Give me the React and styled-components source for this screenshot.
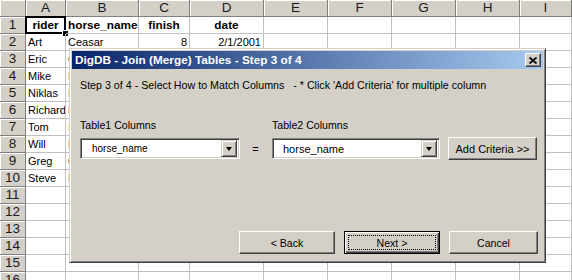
import React from 'react'
import styled, { createGlobalStyle, css } from 'styled-components'

const GlobalStyle = createGlobalStyle`
  html, body { margin: 0; padding: 0; background: #fff; overflow: hidden; }
  * { box-sizing: border-box; }
`

const COLS = ['A', 'B', 'C', 'D', 'E', 'F', 'G', 'H', 'I']

// only the first rows of C and D show, the rest sit behind the dialog
const rows = [
  { a: 'rider', b: 'horse_name', c: 'finish', d: 'date', head: true },
  { a: 'Art', b: 'Ceasar', c: '8', d: '2/1/2001' },
  { a: 'Eric', b: 'Comet' },
  { a: 'Mike', b: 'Flash' },
  { a: 'Niklas', b: 'Fury' },
  { a: 'Richard', b: 'Nugget' },
  { a: 'Tom', b: 'Ike' },
  { a: 'Will', b: 'Nova' },
  { a: 'Greg', b: 'Cody' },
  { a: 'Steve', b: 'Fritz' },
]

const Screen = styled.div`
  position: relative;
  width: 572px;
  height: 280px;
  overflow: hidden;
  background: #fff;
`

const Sheet = styled.div`
  display: grid;
  grid-template-columns: 26px 40px 73px 51px 74px 64px 64px 64px 64px 1fr;
  grid-auto-rows: 17px;
  font-family: "Liberation Sans", Arial, sans-serif;
  font-size: 11px;
  color: #000;
`

const HeadCell = styled.div`
  background: #d4d0c8;
  border-right: 1px solid #808080;
  border-bottom: 1px solid #808080;
  box-shadow: inset 1px 1px #fff;
  display: flex;
  align-items: center;
  justify-content: center;
  font-size: 13.5px;
  line-height: 16px;
  color: #1a1a1a;
`

const Cell = styled.div`
  position: relative;
  border-right: 1px solid #c0c0c0;
  border-bottom: 1px solid #c0c0c0;
  padding: 1px 2px 0;
  line-height: 15px;
  white-space: nowrap;
  overflow: hidden;
  text-align: ${p => p.$align || 'left'};
  font-weight: ${p => (p.$bold ? 'bold' : 'normal')};
  font-size: ${p => (p.$bold ? '11.8px' : '11px')};
  ${p => p.$selected && css`
    overflow: visible;
    &::before {
      content: '';
      position: absolute;
      left: -1px; top: -1px; right: -1px; bottom: -1px;
      border: 2px solid #000;
      pointer-events: none;
    }
    &::after {
      content: '';
      position: absolute;
      right: -3px; bottom: -3px;
      width: 5px; height: 5px;
      background: #000;
      outline: 1px solid #fff;
    }
  `}
`

const Dialog = styled.div`
  position: absolute;
  left: 69px;
  top: 48px;
  width: 477px;
  height: 215px;
  background: #d4d0c8;
  border: 1px solid;
  border-color: #d4d0c8 #404040 #404040 #d4d0c8;
  box-shadow: inset 1px 1px #fff, inset -1px -1px #808080;
  padding: 2px;
  display: flex;
  flex-direction: column;
  font-family: "Liberation Sans", Tahoma, sans-serif;
  font-size: 10.7px;
  color: #000;
`

const TitleBar = styled.div`
  height: 18px;
  background: linear-gradient(to right, #0a246a, #a6caf0);
  display: flex;
  align-items: center;
  justify-content: space-between;
  padding: 0 2px 0 3px;
  color: #fff;
  font-weight: bold;
  font-size: 11.8px;
`

const CloseButton = styled.div`
  width: 16px;
  height: 14px;
  background: #d4d0c8;
  border: 1px solid;
  border-color: #fff #404040 #404040 #fff;
  box-shadow: inset -1px -1px #808080;
  display: flex;
  align-items: center;
  justify-content: center;
`

const Body = styled.div`
  flex: 1;
  display: flex;
  flex-direction: column;
  padding: 0 5px 6px 8px;
`

const Message = styled.div`
  margin-top: 10px;
  line-height: 13px;
  white-space: pre;
`

const Criteria = styled.div`
  margin-top: 27px;
  display: grid;
  grid-template-columns: 160px 32px 168px 97px;
  row-gap: 5px;
  align-items: center;
`

const Label = styled.div`
  line-height: 13px;
  font-size: 10.6px;
`

const Combo = styled.div`
  height: 21px;
  background: #fff;
  border: 1px solid;
  border-color: #808080 #fff #fff #808080;
  box-shadow: inset 1px 1px #404040, inset -1px -1px #d4d0c8;
  padding: 1px 2px 1px 1px;
  display: flex;
  align-items: stretch;
`

const ComboText = styled.div`
  flex: 1;
  display: flex;
  align-items: center;
  padding-left: ${p => p.$indent}px;
  font-size: ${p => p.$size}px;
`

const DropButton = styled.div`
  width: 16px;
  background: #d4d0c8;
  border: 1px solid;
  border-color: #d4d0c8 #404040 #404040 #d4d0c8;
  box-shadow: inset 1px 1px #fff, inset -1px -1px #808080;
  display: flex;
  align-items: center;
  justify-content: center;
  &::after {
    content: '';
    border-left: 3.5px solid transparent;
    border-right: 3.5px solid transparent;
    border-top: 4px solid #000;
  }
`

const Equals = styled.div`
  text-align: center;
  font-size: 11px;
  padding-right: 1px;
`

const Button = styled.div`
  width: ${p => p.$w}px;
  height: ${p => p.$h || 23}px;
  background: #d4d0c8;
  border: 1px solid;
  border-color: #fff #404040 #404040 #fff;
  box-shadow: inset -1px -1px #808080;
  display: flex;
  align-items: center;
  justify-content: center;
  font-size: ${p => p.$size || 10.6}px;
  justify-self: end;
  ${p => p.$default && css`
    border: 1px solid #000;
    box-shadow: inset 1px 1px #fff, inset -1px -1px #404040, inset -2px -2px #808080;
    position: relative;
    &::before {
      content: '';
      position: absolute;
      left: 3px; top: 3px; right: 3px; bottom: 3px;
      border: 1px dotted #000;
    }
  `}
`

const Footer = styled.div`
  margin-top: auto;
  display: flex;
  justify-content: flex-end;
  gap: 9px;
`

function CloseGlyph() {
  return (
    <svg width="8" height="7" viewBox="0 0 8 7">
      <path d="M0.5 0.5 L7.5 6.5 M7.5 0.5 L0.5 6.5" stroke="#000" strokeWidth="1.8" />
    </svg>
  )
}

export default function App() {
  return (
    <Screen>
      <GlobalStyle />
      <Sheet>
        <HeadCell />
        {COLS.map(c => <HeadCell key={c}>{c}</HeadCell>)}
        {Array.from({ length: 16 }).map((_, i) => {
          const r = rows[i]
          return (
            <React.Fragment key={i}>
              <HeadCell>{i + 1}</HeadCell>
              <Cell $bold={r?.head} $align={r?.head ? 'center' : 'left'} $selected={i === 0}>{r?.a}</Cell>
              <Cell $bold={r?.head} $align={r?.head ? 'center' : 'left'}>{r?.b}</Cell>
              <Cell $bold={r?.head} $align={r?.head ? 'center' : 'right'}>{r?.c}</Cell>
              <Cell $bold={r?.head} $align={r?.head ? 'center' : 'right'}>{r?.d}</Cell>
              {Array.from({ length: 5 }).map((__, j) => <Cell key={j} />)}
            </React.Fragment>
          )
        })}
      </Sheet>

      <Dialog>
        <TitleBar>
          <span>DigDB - Join (Merge) Tables - Step 3 of 4</span>
          <CloseButton><CloseGlyph /></CloseButton>
        </TitleBar>
        <Body>
          <Message>{"Step 3 of 4 - Select How to Match Columns   - * Click 'Add Criteria' for multiple column"}</Message>
          <Criteria>
            <Label>Table1 Columns</Label>
            <div />
            <Label>Table2 Columns</Label>
            <div />
            <Combo>
              <ComboText $indent={10} $size={10}>horse_name</ComboText>
              <DropButton />
            </Combo>
            <Equals>=</Equals>
            <Combo>
              <ComboText $indent={9} $size={11}>horse_name</ComboText>
              <DropButton />
            </Combo>
            <Button $w={89} $h={23} $size={11}>Add Criteria &gt;&gt;</Button>
          </Criteria>
          <Footer>
            <Button $w={96}>&lt; Back</Button>
            <Button $w={96} $default>Next &gt;</Button>
            <Button $w={89}>Cancel</Button>
          </Footer>
        </Body>
      </Dialog>
    </Screen>
  )
}
